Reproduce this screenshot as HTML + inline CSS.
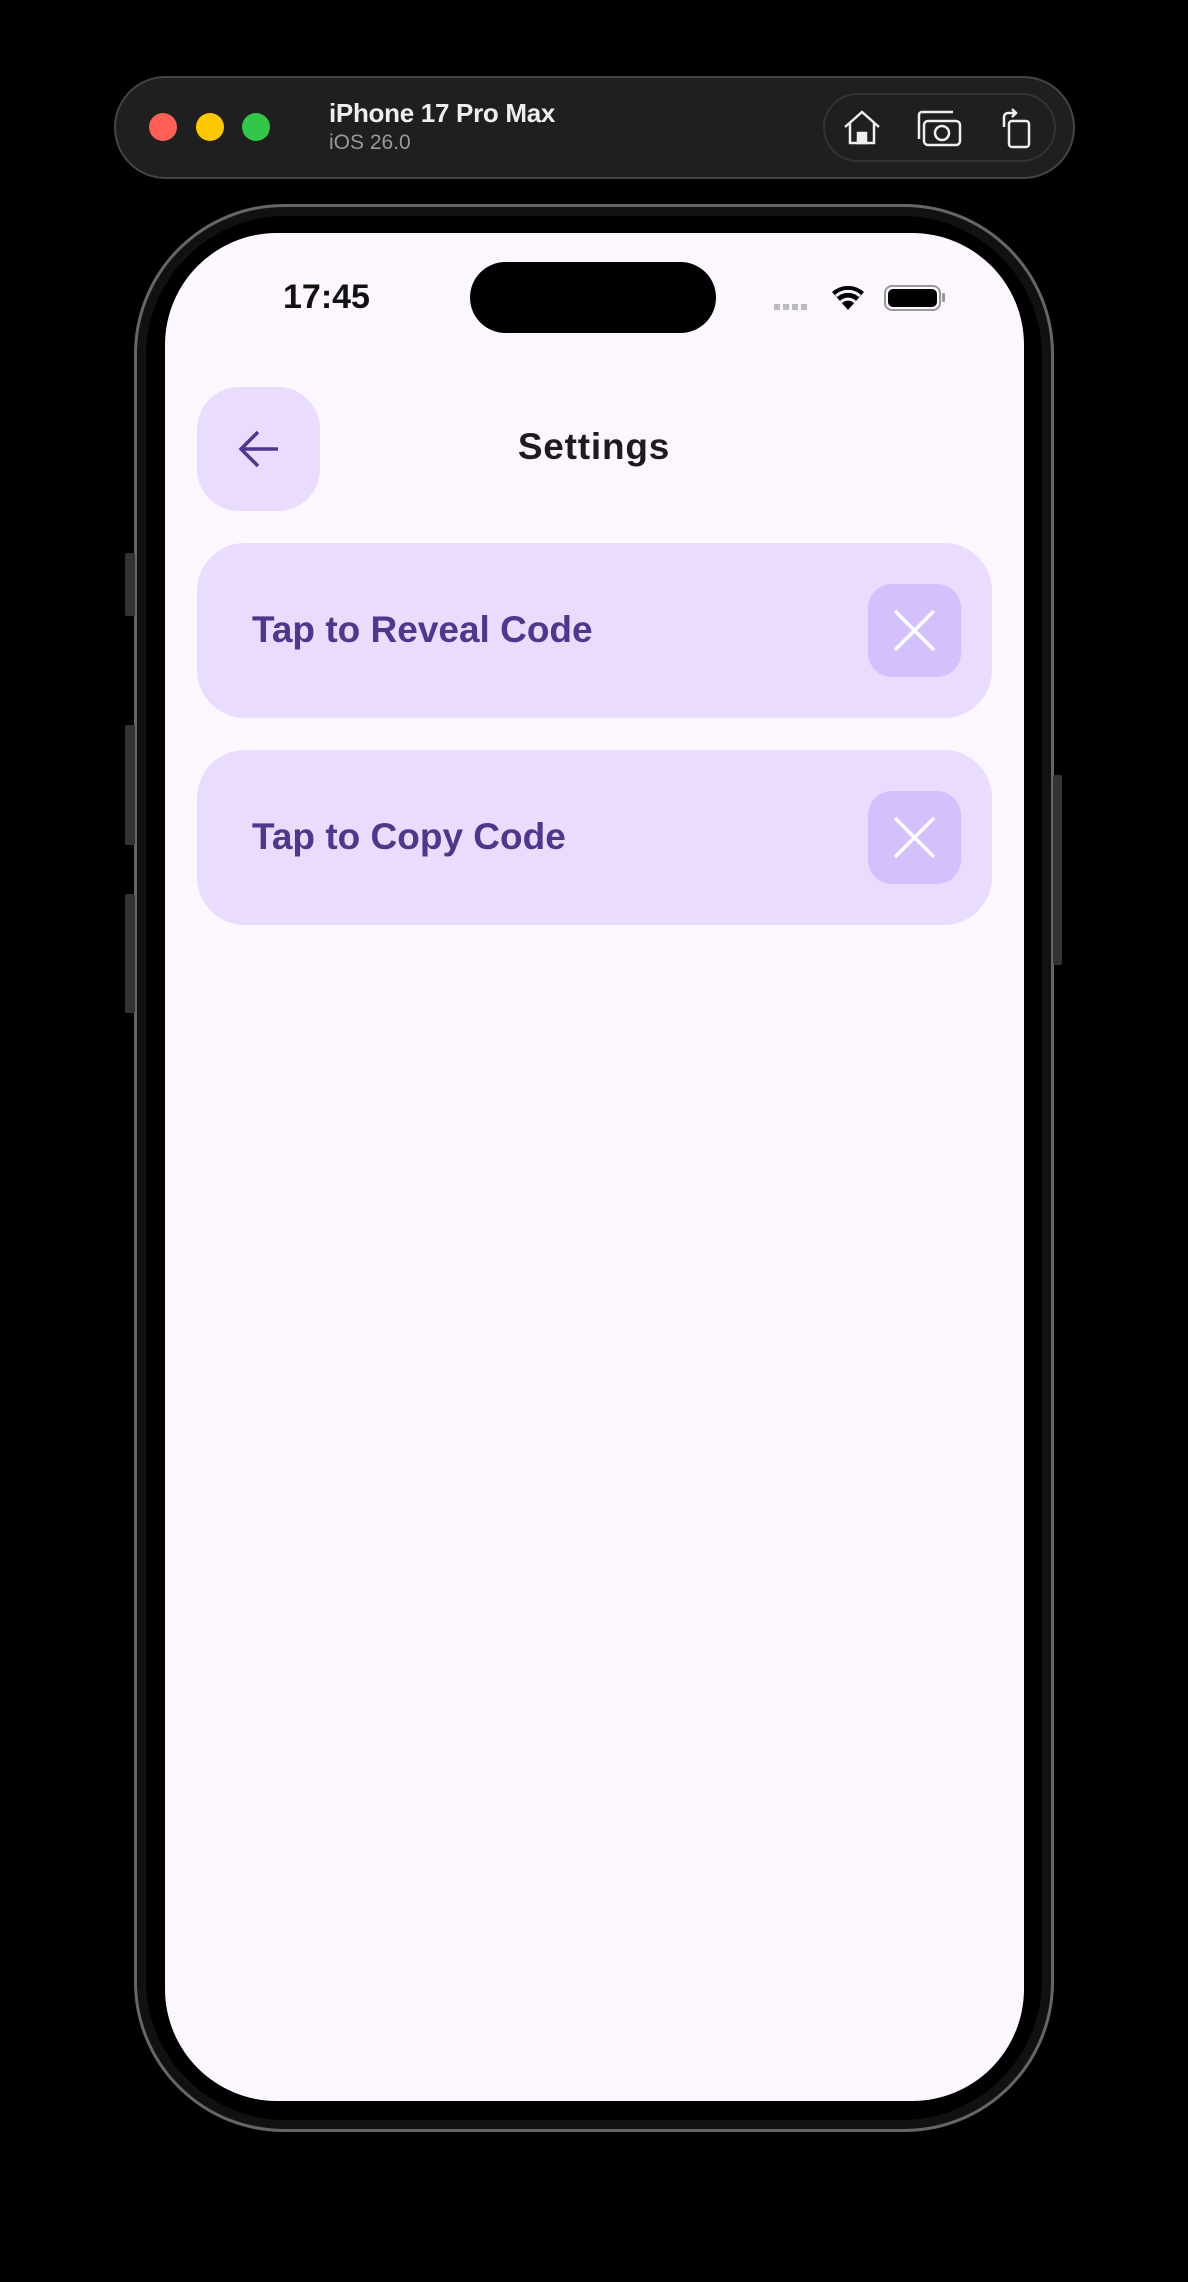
<!DOCTYPE html>
<html><head><meta charset="utf-8"><style>
*{margin:0;padding:0;box-sizing:border-box}
body{width:1188px;height:2282px;background:#000;position:relative;overflow:hidden;font-family:"Liberation Sans",sans-serif}
.a{position:absolute}
</style></head><body>
<div class="a" style="left:114px;top:76px;width:961px;height:103px;border-radius:52px;background:#1f1f1f;border:2px solid #444"></div>
<div class="a" style="left:149px;top:113px;width:28px;height:28px;border-radius:50%;background:#fe5f57"></div>
<div class="a" style="left:196px;top:113px;width:28px;height:28px;border-radius:50%;background:#fdc800"></div>
<div class="a" style="left:242px;top:113px;width:28px;height:28px;border-radius:50%;background:#32c748"></div>
<div class="a" style="left:329px;top:98px;color:#eee;font-size:26px;font-weight:bold;letter-spacing:-0.3px">iPhone 17 Pro Max</div>
<div class="a" style="left:329px;top:131px;color:#999;font-size:21px">iOS 26.0</div>
<div class="a" style="left:823px;top:93px;width:233px;height:69px;border-radius:35px;border:2px solid #333"></div>
<svg class="a" style="left:841px;top:107px" width="200" height="42" viewBox="0 0 200 42" fill="none" stroke="#eee" stroke-width="2.5">
<path d="M4 20 L21 5 L38 20 M9 16 V36 H33 V16"/><rect x="17" y="26" width="8" height="10" fill="#eee"/>
<rect x="83" y="14" width="36" height="24" rx="4"/><path d="M78 32 V8 a3 3 0 0 1 3-3 H112"/><circle cx="101" cy="26" r="7"/>
<rect x="168" y="14" width="20" height="26" rx="3"/><path d="M163 20 V10 a4 4 0 0 1 4-4 h8 M171 2 l4 4 -4 4"/>
</svg>
<div class="a" style="left:134px;top:204px;width:920px;height:1928px;border-radius:150px;background:#111;border:3px solid #666"></div>
<div class="a" style="left:125px;top:553px;width:10px;height:63px;background:#333;border-radius:2px"></div>
<div class="a" style="left:125px;top:725px;width:10px;height:120px;background:#333;border-radius:2px"></div>
<div class="a" style="left:125px;top:894px;width:10px;height:119px;background:#333;border-radius:2px"></div>
<div class="a" style="left:1053px;top:775px;width:9px;height:190px;background:#333;border-radius:2px"></div>
<div class="a" style="left:146px;top:216px;width:896px;height:1904px;border-radius:140px;background:#000"></div>
<div class="a" style="left:165px;top:233px;width:859px;height:1868px;border-radius:112px;background:#fcf6fe"></div>
<div class="a" style="left:470px;top:262px;width:246px;height:71px;border-radius:36px;background:#000"></div>
<div class="a" style="left:283px;top:278px;font-size:34px;font-weight:bold;color:#111">17:45</div>
<div class="a" style="left:774px;top:304px;width:34px;height:6px;background:repeating-linear-gradient(90deg,#bbb 0 6px,transparent 6px 9px)"></div>
<svg class="a" style="left:830px;top:282px" width="36" height="30" viewBox="0 0 36 30"><path d="M18 28 L2 10 A24 24 0 0 1 34 10 Z" fill="#000"/><path d="M6 14 A18 18 0 0 1 30 14" stroke="#fcf6fe" stroke-width="3" fill="none"/><path d="M11 20 A10 10 0 0 1 25 20" stroke="#fcf6fe" stroke-width="3" fill="none"/></svg>
<div class="a" style="left:884px;top:285px;width:57px;height:26px;border-radius:8px;border:2px solid #999"></div>
<div class="a" style="left:888px;top:289px;width:49px;height:18px;border-radius:5px;background:#000"></div>
<div class="a" style="left:942px;top:293px;width:3px;height:9px;background:#999;border-radius:1px"></div>
<div class="a" style="left:197px;top:387px;width:123px;height:124px;border-radius:42px;background:#e9dcfe"></div>
<svg class="a" style="left:236px;top:426px" width="46" height="46" viewBox="0 0 46 46" fill="none" stroke="#4f378b" stroke-width="3.5"><path d="M5 23 H42 M22 6 L5 23 L22 40"/></svg>
<div class="a" style="left:0;width:1188px;top:426px;text-align:center;font-size:37px;font-weight:bold;color:#1d1b20;letter-spacing:0.8px">Settings</div>
<div class="a" style="left:197px;top:543px;width:795px;height:175px;border-radius:48px;background:#e9dcfe"></div>
<div class="a" style="left:252px;top:609px;font-size:37px;font-weight:bold;color:#4f378b">Tap to Reveal Code</div>
<div class="a" style="left:868px;top:584px;width:93px;height:93px;border-radius:24px;background:#d3c0fd"></div>
<svg class="a" style="left:893px;top:609px" width="43" height="43" viewBox="0 0 43 43" stroke="#fff" stroke-width="3.5"><path d="M2 2 L41 41 M41 2 L2 41"/></svg>
<div class="a" style="left:197px;top:750px;width:795px;height:175px;border-radius:48px;background:#e9dcfe"></div>
<div class="a" style="left:252px;top:816px;font-size:37px;font-weight:bold;color:#4f378b">Tap to Copy Code</div>
<div class="a" style="left:868px;top:791px;width:93px;height:93px;border-radius:24px;background:#d3c0fd"></div>
<svg class="a" style="left:893px;top:816px" width="43" height="43" viewBox="0 0 43 43" stroke="#fff" stroke-width="3.5"><path d="M2 2 L41 41 M41 2 L2 41"/></svg>
</body></html>
